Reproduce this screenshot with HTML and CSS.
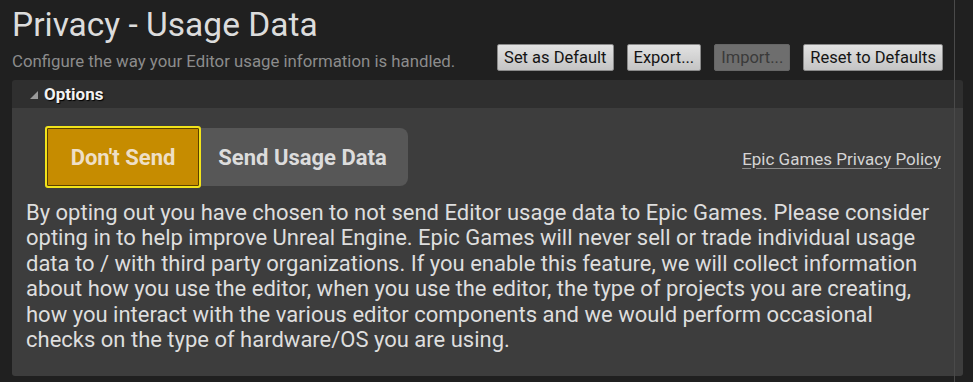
FILE: index.html
```html
<!DOCTYPE html>
<html lang="en">
<head>
    <meta charset="UTF-8">
    <title>Privacy - Usage Data</title>
    <link rel="stylesheet" href="styles.css">
</head>
<body>
    <div class="page">
        <h1 class="title">Privacy - Usage Data</h1>
        <div class="subrow">
            <p class="subtitle">Configure the way your Editor usage information is handled.</p>
            <div class="toolbar">
                <button class="tool-btn">Set as Default</button>
                <button class="tool-btn">Export...</button>
                <button class="tool-btn disabled">Import...</button>
                <button class="tool-btn">Reset to Defaults</button>
            </div>
        </div>

        <div class="panel">
            <div class="panel-head">
                <span class="caret"></span>
                <span class="panel-title">Options</span>
            </div>
            <div class="panel-body">
                <div class="choice-row">
                    <div class="segmented">
                        <button class="seg seg-on">Don't Send</button>
                        <button class="seg seg-off">Send Usage Data</button>
                    </div>
                    <a class="policy" href="#">Epic Games Privacy Policy</a>
                </div>
                <p class="notice">
                    By opting out you have chosen to not send Editor usage data to Epic Games. Please consider<br>
                    opting in to help improve Unreal Engine. Epic Games will never sell or trade individual usage<br>
                    data to / with third party organizations. If you enable this feature, we will collect information<br>
                    about how you use the editor, when you use the editor, the type of projects you are creating,<br>
                    how you interact with the various editor components and we would perform occasional<br>
                    checks on the type of hardware/OS you are using.
                </p>
            </div>
        </div>
    </div>
    <div class="splitter"></div>
</body>
</html>
```

FILE: styles.css
```css
body {
    margin: 0;
    background: #202020;
    font-family: Roboto, "Liberation Sans", sans-serif;
    color: #d8d8d8;
    height: 382px;
    overflow: hidden;
    position: relative;
}

.page {
    padding: 5px 10px 0 12px;
}

.title {
    margin: 0;
    font-size: 33.5px;
    font-weight: 400;
    line-height: 39px;
    color: #dcdcdc;
}

.subrow {
    display: flex;
    justify-content: space-between;
    align-items: flex-end;
}

.subtitle {
    margin: 0;
    font-size: 16.8px;
    color: #8c8c8c;
}

.toolbar {
    display: flex;
    gap: 13px;
    padding-right: 20px;
}

.tool-btn {
    font-family: Roboto, "Liberation Sans", sans-serif;
    font-size: 16.5px;
    color: #141414;
    height: 27px;
    padding: 0 6px;
    border: 1px solid #8a8a8a;
    border-radius: 2px;
    background: linear-gradient(#e2e2e2, #c4c4c4);
}

.tool-btn.disabled {
    background: #6e6e6e;
    border-color: #666;
    color: #3a3a3a;
}

.panel {
    margin-top: 9px;
    width: 951px;
    border-radius: 3px;
    overflow: hidden;
}

.panel-head {
    background: #2f2f2f;
    height: 28px;
    display: flex;
    align-items: center;
    padding-left: 18px;
    gap: 6px;
}

.caret {
    width: 0;
    height: 0;
    border-left: 8px solid transparent;
    border-bottom: 8px solid #9a9a9a;
    margin-top: 1px;
}

.panel-title {
    font-size: 17px;
    font-weight: 700;
    color: #f2f2f2;
    text-shadow: 1px 1px 1px #000;
}

.panel-body {
    background: #3d3d3d;
    padding: 18px 22px 0 14px;
    height: 250px;
}

.choice-row {
    display: flex;
    justify-content: space-between;
    align-items: center;
    padding-left: 19px;
}

.segmented {
    display: flex;
    align-items: center;
}

.seg {
    font-family: Roboto, "Liberation Sans", sans-serif;
    font-size: 22px;
    font-weight: 700;
    border: none;
    padding: 0;
}

.seg-on {
    width: 156px;
    height: 62px;
    background: #c68c00;
    border: 2px solid #f2e41a;
    border-radius: 3px;
    color: #eedfc6;
    box-shadow: inset 0 0 0 1px #5a4000;
}

.seg-off {
    width: 207px;
    height: 58px;
    background: #575757;
    color: #dcdcdc;
    border-radius: 0 8px 8px 0;
    padding-right: 4px;
}

.policy {
    font-size: 17px;
    color: #d4d4d4;
    text-decoration: underline;
    text-decoration-color: #8a8a8a;
    text-underline-offset: 3px;
    margin-top: 3px;
}

.notice {
    margin: 12px 0 0 0;
    font-size: 22px;
    line-height: 25.4px;
    color: #dedede;
    white-space: nowrap;
}

.splitter {
    position: absolute;
    top: 0;
    bottom: 0;
    left: 954px;
    width: 1px;
    background: #4a4a4a;
}
```
